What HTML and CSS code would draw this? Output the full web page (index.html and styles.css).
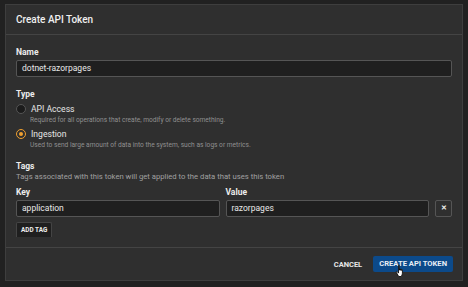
FILE: index.html
```html
<!DOCTYPE html>
<html lang="en">
<head>
  <meta charset="UTF-8" />
  <title>Create API Token</title>
  <link rel="stylesheet" href="styles.css">
</head>
<body>
  <div class="dialog">
    <div class="dialog-header">Create API Token</div>

    <div class="dialog-body">
      <label class="label">Name</label>
      <div class="input">dotnet-razorpages</div>

      <label class="label type-label">Type</label>
      <div class="radio-row">
        <span class="radio"></span>
        <span class="radio-text">API Access</span>
      </div>
      <div class="hint">Required for all operations that create, modify or delete something.</div>
      <div class="radio-row">
        <span class="radio checked"></span>
        <span class="radio-text">Ingestion</span>
      </div>
      <div class="hint">Used to send large amount of data into the system, such as logs or metrics.</div>

      <label class="label tags-label">Tags</label>
      <div class="tags-desc">Tags associated with this token will get applied to the data that uses this token</div>

      <div class="tag-row">
        <div class="tag-col">
          <label class="label">Key</label>
          <div class="input">application</div>
        </div>
        <div class="tag-col">
          <label class="label">Value</label>
          <div class="input">razorpages</div>
        </div>
        <div class="remove">&#x2715;</div>
      </div>

      <div class="add-tag">ADD TAG</div>
    </div>

    <div class="dialog-footer">
      <span class="cancel">CANCEL</span>
      <span class="create">CREATE API TOKEN
        <svg class="cursor" width="11" height="13" viewBox="0 0 11 13">
          <path d="M3.5 1.2c0-.6.9-.6.9 0v5l.1-1c0-.6.9-.6.9 0v1.1l.1-.8c0-.6.9-.6.9 0v1l.1-.6c0-.6.9-.6.9 0v3.4c0 1.2-.6 2.4-1.3 3.2H3.7L1.3 8.3c-.4-.6.3-1.2.8-.7l1.4 1.5z" fill="#fff" stroke="#000" stroke-width=".8" stroke-linejoin="round"/>
        </svg>
      </span>
    </div>
  </div>
</body>
</html>
```

FILE: styles.css
```css
body {
  margin: 0;
  background: #212121;
  font-family: Roboto, "Liberation Sans", sans-serif;
  color: #e6e6e6;
}

.dialog {
  margin: 4px 0 0 5px;
  width: 456px;
  height: 275px;
  background: #2f2f2f;
  border: 1px solid #3e3e3e;
  display: flex;
  flex-direction: column;
}

.dialog-header {
  height: 29px;
  line-height: 29px;
  padding-left: 10px;
  font-size: 10px;
  font-weight: 500;
  color: #f0f0f0;
  border-bottom: 1px solid #444;
}

.dialog-body {
  flex: 1;
  padding: 12px 10px 0 10px;
  display: flex;
  flex-direction: column;
  border-bottom: 1px solid #444;
}

.label {
  display: block;
  font-size: 8.5px;
  font-weight: 700;
  line-height: 10px;
  margin-bottom: 3px;
  color: #ececec;
}

.input {
  height: 15px;
  line-height: 15px;
  background: #1f1f1f;
  border: 1px solid #555;
  border-radius: 2px;
  padding-left: 5px;
  font-size: 8.5px;
  color: #e8e8e8;
}

.type-label {
  margin-top: 12px;
  margin-bottom: 4px;
}

.radio-row {
  display: flex;
  align-items: center;
  height: 12px;
  gap: 5px;
}

.radio {
  width: 8px;
  height: 8px;
  border-radius: 50%;
  border: 1px solid #555;
  background: #1c1c1c;
  box-sizing: content-box;
  position: relative;
}

.radio.checked {
  border-color: #f0a030;
  background: #2f2f2f;
}

.radio.checked::after {
  content: "";
  position: absolute;
  left: 2px;
  top: 2px;
  width: 4px;
  height: 4px;
  border-radius: 50%;
  background: #f0a030;
}

.radio-text {
  font-size: 8.6px;
  color: #e6e6e6;
}

.hint {
  padding-left: 14px;
  font-size: 6.6px;
  line-height: 10px;
  color: #8f8f8f;
  margin-bottom: 3px;
}

.tags-label {
  margin-top: 8px;
  margin-bottom: 1px;
}

.tags-desc {
  font-size: 7.7px;
  line-height: 10px;
  color: #a0a0a0;
  margin-bottom: 5px;
}

.tag-row {
  display: flex;
  align-items: flex-end;
  gap: 6px;
}

.tag-col {
  flex: 1;
}

.remove {
  width: 15px;
  height: 15px;
  border: 1px solid #555;
  border-radius: 2px;
  font-size: 7px;
  line-height: 15px;
  text-align: center;
  color: #eee;
  font-weight: 700;
}

.add-tag {
  align-self: flex-start;
  margin-top: 5px;
  height: 14px;
  line-height: 14px;
  padding: 0 4px;
  background: #1f1f1f;
  border: 1px solid #444;
  border-bottom: none;
  border-radius: 2px 2px 0 0;
  font-size: 6.4px;
  font-weight: 700;
  color: #eee;
}

.dialog-footer {
  height: 32px;
  display: flex;
  align-items: center;
  justify-content: flex-end;
  padding-right: 9px;
  gap: 11px;
}

.cancel {
  font-size: 7.5px;
  font-weight: 700;
  color: #e8e8e8;
}

.create {
  position: relative;
  height: 16px;
  line-height: 16px;
  padding: 0 6px;
  background: #0c4a8a;
  border-radius: 2px;
  font-size: 7.6px;
  font-weight: 700;
  color: #e8eef6;
}

.cursor {
  position: absolute;
  left: 22px;
  top: 8px;
}
```
